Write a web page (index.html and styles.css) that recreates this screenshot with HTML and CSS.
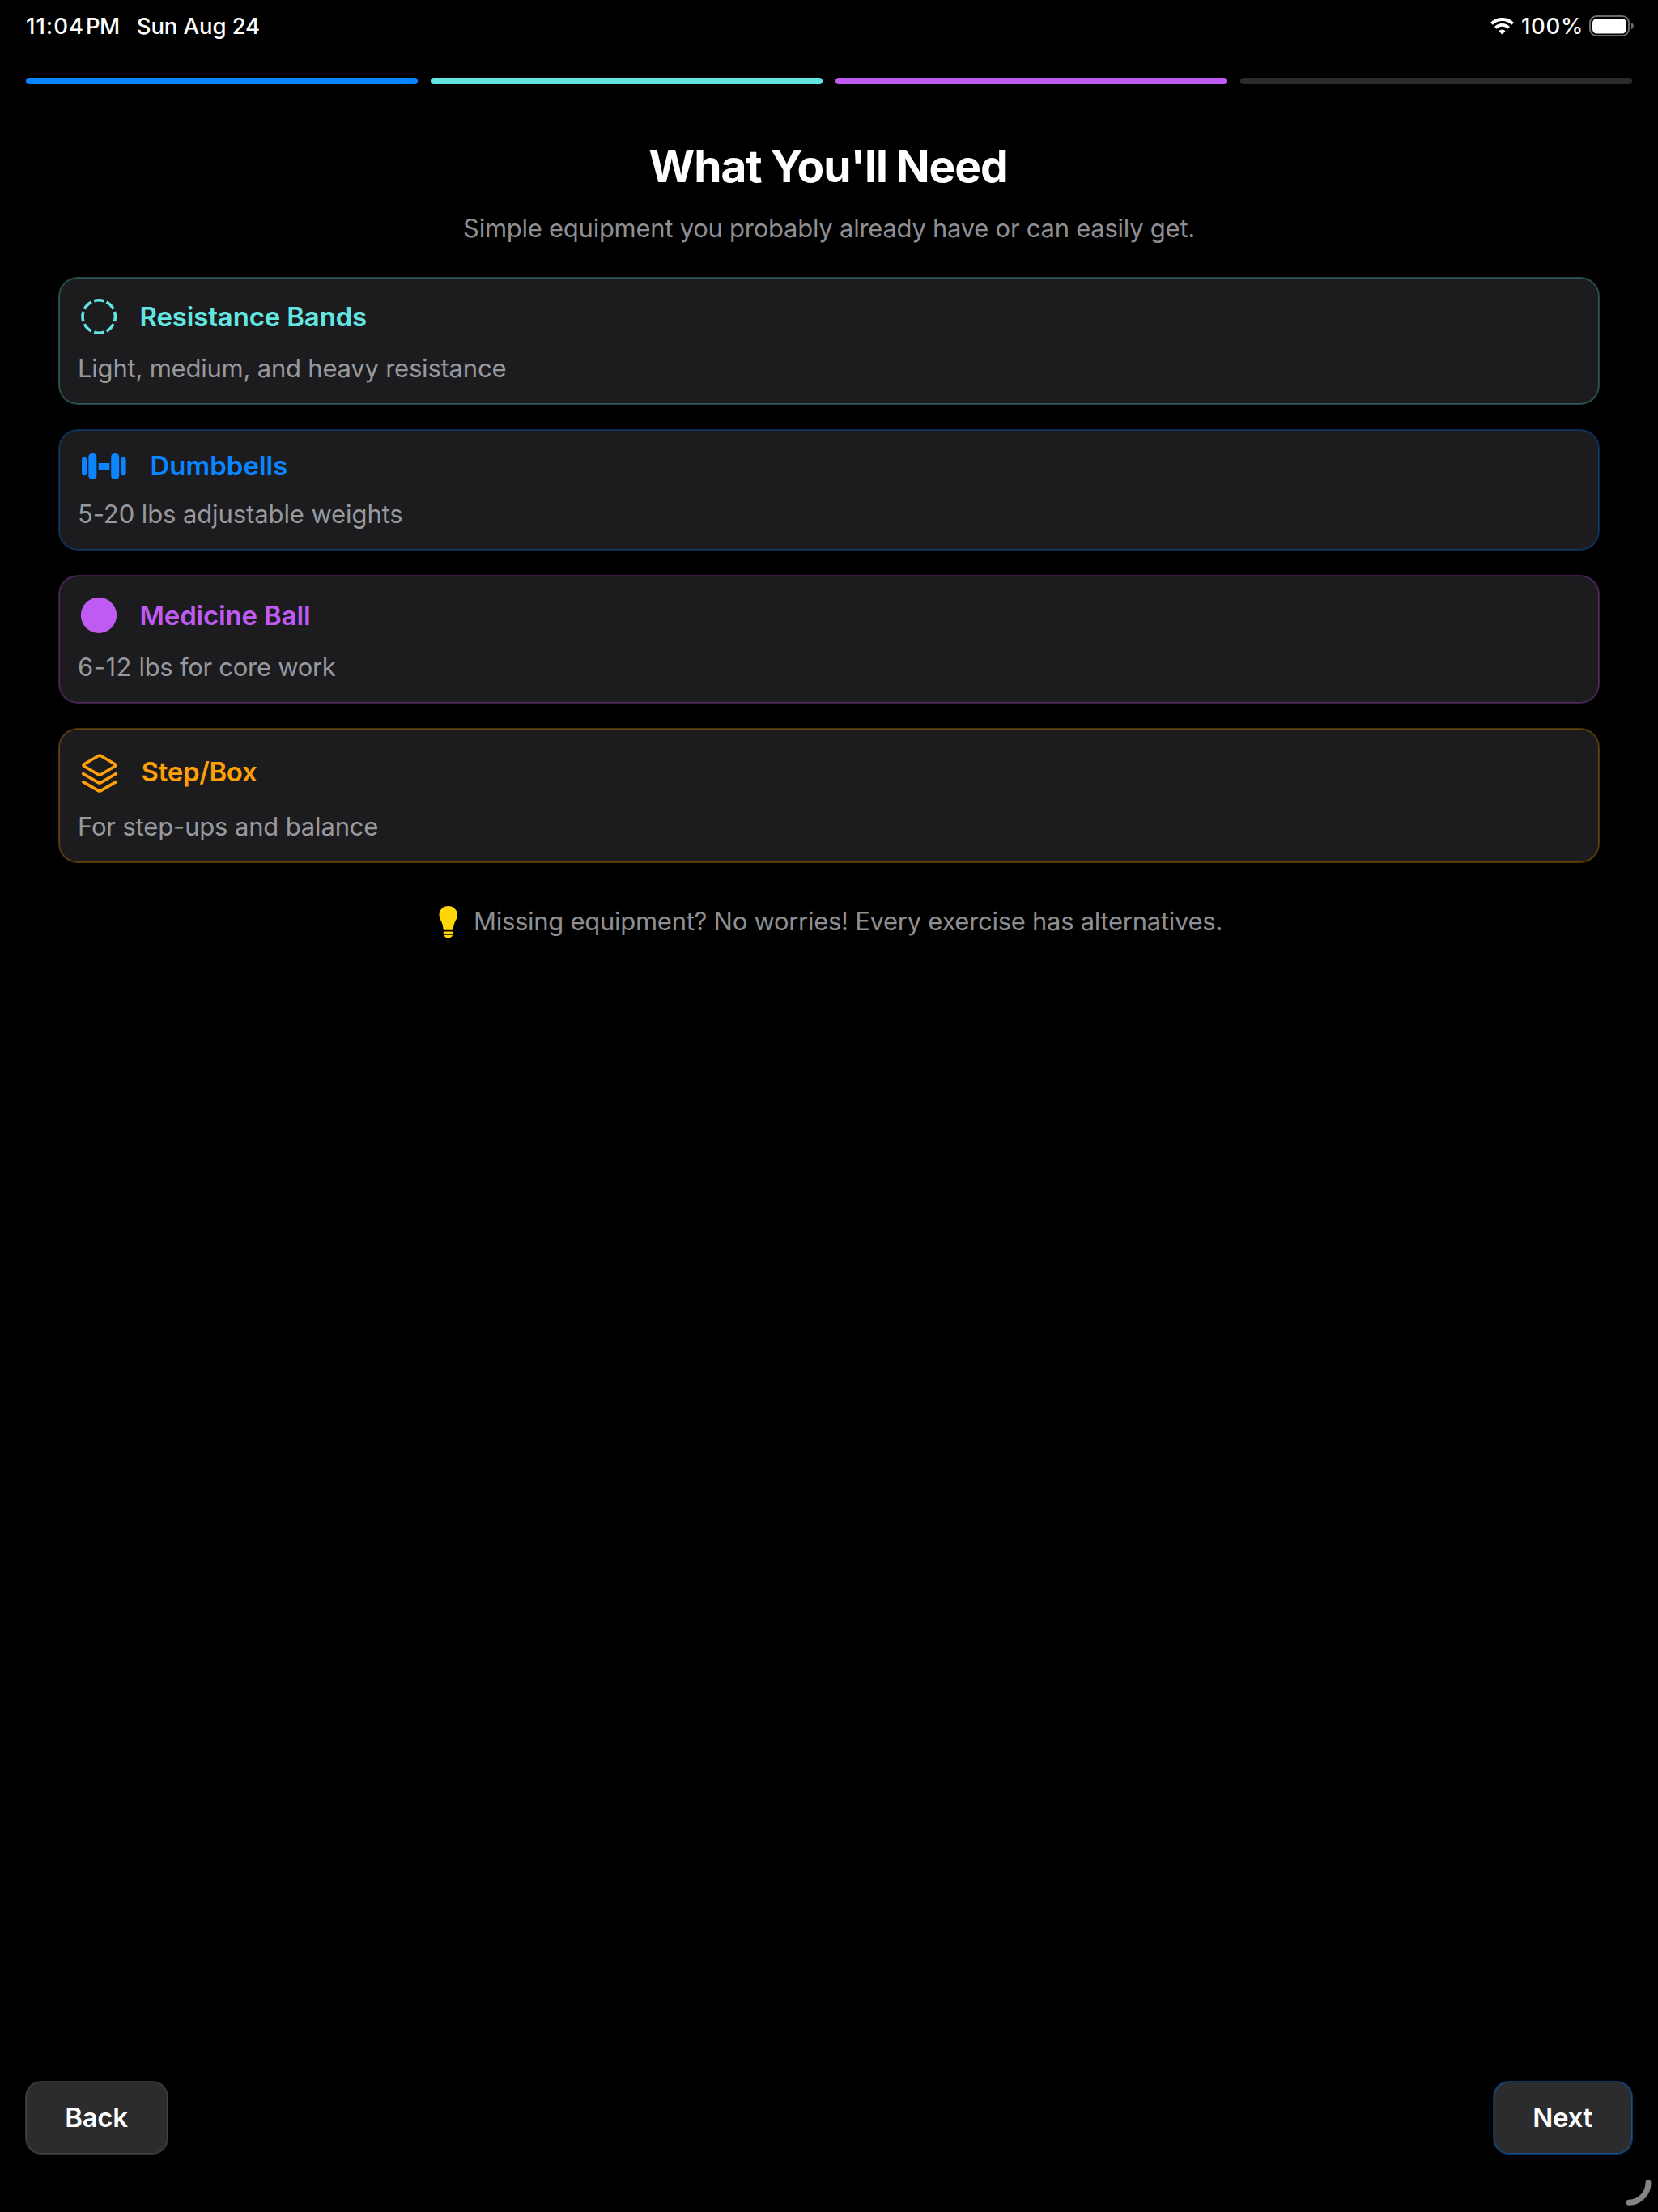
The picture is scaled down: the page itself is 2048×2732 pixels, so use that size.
FILE: index.html
```html
<!DOCTYPE html>
<html lang="en">
<head>
<meta charset="utf-8">
<title>What You'll Need</title>
<link rel="stylesheet" href="styles.css">
</head>
<body>
<div class="screen">
  <header class="status">
    <span class="time">11:04</span><span class="meridiem">PM</span>
    <span class="date">Sun Aug 24</span>
    <svg class="wifi" width="29" height="21" viewBox="0 0 29 21" fill="none">
      <path d="M1.4 7.4A18.5 18.5 0 0 1 27.6 7.4" stroke="#fff" stroke-width="4"/>
      <path d="M6.3 12.3A11.6 11.6 0 0 1 22.7 12.3" stroke="#fff" stroke-width="3.8"/>
      <path d="M10.4 16.2A6 6 0 0 1 18.6 16.2L15.2 19.9Q14.5 20.6 13.8 19.9Z" fill="#fff"/>
    </svg>
    <span class="percent">100%</span>
    <svg class="battery" width="55" height="26" viewBox="0 0 55 26">
      <rect x="1" y="1" width="48" height="24" rx="8" fill="none" stroke="#6c6c6c" stroke-width="2"/>
      <rect x="4" y="4" width="42" height="18.5" rx="5.5" fill="#fff"/>
      <path d="M52 9Q55 10.500 55 13T52 17.500Z" fill="#6c6c6c"/>
    </svg>
  </header>

  <div class="progress">
    <div class="bar blue"></div>
    <div class="bar teal"></div>
    <div class="bar purple"></div>
    <div class="bar"></div>
  </div>

  <main>
    <h1>What You'll Need</h1>
    <p class="subtitle">Simple equipment you probably already have or can easily get.</p>

    <section class="cards">
      <article class="card teal">
        <div class="card-head">
          <svg width="52" height="50" viewBox="0 0 52 50" fill="none">
            <circle cx="26.200" cy="25" r="20.200" pathLength="8" stroke="currentColor" stroke-width="3.600" stroke-dasharray=".78 .22" stroke-dashoffset=".39"/>
          </svg>
          <h2>Resistance Bands</h2>
        </div>
        <p>Light, medium, and heavy resistance</p>
      </article>
      <article class="card blue">
        <div class="card-head">
          <svg width="65" height="42" viewBox="0 0 65 42" fill="currentColor">
            <rect x="5" y="10.700" width="6.200" height="22.600" rx="3.100"/>
            <rect x="13.300" y="6" width="10" height="32" rx="4.500"/>
            <rect x="25.700" y="18" width="13.600" height="8.300"/>
            <rect x="41.200" y="6" width="10" height="32" rx="4.500"/>
            <rect x="53.400" y="10.700" width="6.200" height="22.600" rx="3.100"/>
          </svg>
          <h2 class="dumbbells">Dumbbells</h2>
        </div>
        <p class="weights">5-20 lbs adjustable weights</p>
      </article>
      <article class="card purple">
        <div class="card-head">
          <svg width="52" height="51" viewBox="0 0 52 51" fill="currentColor">
            <circle cx="26" cy="25.900" r="22.100"/>
          </svg>
          <h2>Medicine Ball</h2>
        </div>
        <p class="core"><span class="range">6-12</span> lbs for core work</p>
      </article>
      <article class="card orange">
        <div class="card-head">
          <svg width="54" height="59" viewBox="0 0 54 59" fill="none" stroke="currentColor" stroke-width="3.600" stroke-linecap="round" stroke-linejoin="round">
            <path d="M25.600 10.500Q27 9.600 28.400 10.500L46 20.800Q48.200 22.100 46 23.400L28.400 33.700Q27 34.600 25.600 33.700L8 23.400Q5.800 22.100 8 20.800Z"/>
            <path d="M6.700 32.600L25.600 43.600Q27 44.400 28.400 43.600L47.300 32.600"/>
            <path d="M6.700 42.600L25.600 53.600Q27 54.400 28.400 53.600L47.300 42.600"/>
          </svg>
          <h2 class="step">Step/Box</h2>
        </div>
        <p class="balance">For step-ups and balance</p>
      </article>
    </section>

    <div class="tip">
      <svg width="30" height="44" viewBox="0 0 30 44" fill="#ffd60a">
        <path d="M14.700 3C8.300 3 3.500 7.700 3.500 14C3.500 20 8 22 8.500 31.300Q8.600 32.700 10 32.700H19.400Q20.800 32.700 20.900 31.300C21.400 22 25.900 20 25.900 14C25.900 7.700 21.100 3 14.700 3Z"/>
        <rect x="8.700" y="34.400" width="12" height="2.500" rx=".8"/>
        <path d="M9.300 38.700H20.100Q19 42.200 14.700 42.200T9.300 38.700Z"/>
      </svg>
      <span>Missing equipment? No worries! Every exercise has alternatives.</span>
    </div>
  </main>

  <footer class="actions">
    <button class="btn back">Back</button>
    <button class="btn next">Next</button>
  </footer>

  <svg class="corner" width="40" height="40" viewBox="0 0 40 40" fill="none">
    <path d="M32 8A24.300 24.300 0 0 1 8 32.300" stroke="#848484" stroke-width="7" stroke-linecap="round"/>
  </svg>
</div>
</body>
</html>
```
FILE: styles.css
```css
* { box-sizing: border-box; }

body {
  margin: 0;
  background: #000;
  color: #fff;
  font-family: Inter, "Liberation Sans", sans-serif;
}

h1, h2, p { margin: 0; }
svg { display: block; flex: none; }

.screen {
  position: relative;
  display: flex;
  flex-direction: column;
  height: 2732px;
  overflow: hidden;
}

.teal { --accent: #63e6e2; --edge: rgba(99, 230, 226, .3); }
.blue { --accent: #0a84ff; --edge: rgba(10, 132, 255, .3); }
.purple { --accent: #bf5af2; --edge: rgba(191, 90, 242, .3); }
.orange { --accent: #ff9f0a; --edge: rgba(255, 159, 10, .3); }

/* Status bar */
.status {
  display: flex;
  align-items: center;
  height: 40px;
  margin-top: 12px;
  padding: 0 30px 0 32px;
  font-size: 27.5px;
  font-weight: 480;
  line-height: 40px;
}
.time { letter-spacing: 1px; }
.meridiem { margin-left: 2px; letter-spacing: -.5px; }
.date { margin-left: 21px; letter-spacing: -.08px; }
.wifi { margin-left: auto; }
.percent { margin: 0 7px 0 9px; letter-spacing: .7px; }

/* Step progress */
.progress {
  display: flex;
  gap: 16px;
  margin: 44px 32px 0;
}
.bar {
  flex: 1;
  height: 8px;
  border-radius: 4px;
  background: var(--accent, #2c2c2e);
}

main { padding: 68px 72px 0; }

h1 {
  padding-right: 2px;
  font-size: 55px;
  font-weight: 700;
  line-height: 66px;
  letter-spacing: -1.05px;
  word-spacing: -1px;
  text-align: center;
}
.subtitle {
  margin-top: 24px;
  color: #8e8e93;
  font-size: 31px;
  line-height: 40px;
  letter-spacing: -.26px;
  text-align: center;
}

/* Equipment cards */
.cards {
  display: flex;
  flex-direction: column;
  gap: 30px;
  margin-top: 40px;
}
.card {
  padding: 23px 23px 24px;
  border: 1px solid var(--edge);
  border-radius: 24px;
  background: #1c1c1e padding-box;
  box-shadow: inset 0 0 0 1px var(--edge);
}
.card-head {
  display: flex;
  align-items: center;
  gap: 24.5px;
  color: var(--accent);
}
.card h2 {
  font-size: 33px;
  font-weight: 580;
  line-height: 40px;
  letter-spacing: -.16px;
}
.card h2.dumbbells { letter-spacing: 0; }
.card h2.step { letter-spacing: -.3px; }
.card p {
  margin-top: 19px;
  color: #98989f;
  font-size: 31px;
  line-height: 40px;
  letter-spacing: -.22px;
}
.card p.weights { letter-spacing: -.1px; }
.card p.core { letter-spacing: -.28px; }
.card .range { letter-spacing: .5px; }
.card p.balance { letter-spacing: -.16px; }

.tip {
  display: flex;
  align-items: center;
  justify-content: center;
  gap: 16px;
  height: 44px;
  margin-top: 50px;
  padding-left: 1px;
  color: #8e8e93;
  font-size: 31px;
  line-height: 40px;
  letter-spacing: -.28px;
}

/* Navigation */
.actions {
  display: flex;
  justify-content: space-between;
  margin-top: auto;
  padding: 0 31px 71px;
}
.btn {
  width: 177px;
  height: 91px;
  padding: 0 1px 2px 0;
  border: 1px solid var(--edge);
  border-radius: 20px;
  background: #2c2c2e padding-box;
  box-shadow: inset 0 0 0 1px var(--edge);
  color: #fff;
  font: 580 33px/40px Inter, "Liberation Sans", sans-serif;
  letter-spacing: -.3px;
}
.back { --edge: rgba(84, 84, 88, .6); }
.next { --edge: rgba(10, 132, 255, .42); width: 173px; }

.corner {
  position: absolute;
  right: 4px;
  bottom: 4px;
}
```
